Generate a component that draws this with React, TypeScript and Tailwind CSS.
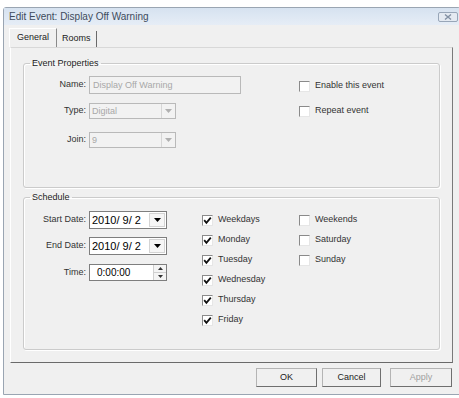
import React from "react";

function Arrow({ color = "#000" }: { color?: string }) {
  return (
    <svg width="7" height="4" viewBox="0 0 7 4">
      <polygon points="0,0 7,0 3.5,4" fill={color} />
    </svg>
  );
}

function CheckBox({ label, checked = false, h = "h-[20px]" }: { label: string; checked?: boolean; h?: string }) {
  return (
    <div className={`flex items-center gap-[5px] ${h}`}>
      <span className="w-[11px] h-[11px] flex items-center justify-center bg-white border border-t-[#8a8a8a] border-l-[#8a8a8a] border-b-[#e6e6e6] border-r-[#e6e6e6]">
        {checked && (
          <svg width="9" height="9" viewBox="0 0 9 9">
            <path d="M1.2 4.2 L3.4 6.8 L7.8 1.6" stroke="#111" strokeWidth="1.8" fill="none" />
          </svg>
        )}
      </span>
      <span className="text-[9px] text-[#333]">{label}</span>
    </div>
  );
}

function DisabledSelect({ value }: { value: string }) {
  return (
    <div className="w-[87px] h-[16px] flex border border-[#b9b9b9] bg-[#f2f2f2]">
      <span className="flex-1 pl-[2px] text-[9px] leading-[14px] text-[#a8a8a8]">{value}</span>
      <span className="w-[14px] flex items-center justify-center border-l border-[#d6d6d6]">
        <Arrow color="#b0b0b0" />
      </span>
    </div>
  );
}

function DatePicker({ value }: { value: string }) {
  return (
    <div className="w-[78px] h-[18px] flex border border-[#7e7e7e] bg-white">
      <span className="flex-1 pl-[2px] text-[11px] leading-[16px] text-black whitespace-pre">{value}</span>
      <span className="w-[16px] my-[1px] mr-[1px] flex items-center justify-center bg-[#f6f6f6] border border-[#d4d4d4]">
        <Arrow />
      </span>
    </div>
  );
}

function TimeBox({ value }: { value: string }) {
  return (
    <div className="w-[78px] h-[17px] flex border border-[#7e7e7e] bg-white">
      <span className="flex-1 pl-[7px] text-[10px] leading-[15px] text-black">{value}</span>
      <span className="w-[13px] flex flex-col border-l border-[#d0d0d0]">
        <span className="flex-1 flex items-center justify-center bg-[#f4f4f4] border-b border-[#d0d0d0]">
          <svg width="5" height="3" viewBox="0 0 5 3"><polygon points="0,3 5,3 2.5,0" fill="#333" /></svg>
        </span>
        <span className="flex-1 flex items-center justify-center bg-[#f4f4f4]">
          <svg width="5" height="3" viewBox="0 0 5 3"><polygon points="0,0 5,0 2.5,3" fill="#333" /></svg>
        </span>
      </span>
    </div>
  );
}

function Label({ text }: { text: string }) {
  return <span className="w-[62px] text-right text-[9px] text-[#333]">{text}</span>;
}

function DialogButton({ text, className, disabled = false }: { text: string; className: string; disabled?: boolean }) {
  return (
    <button
      className={`${className} h-[19px] text-[9px] bg-[#f0f0f0] border border-[#b4b4b4] border-r-[#6f6f6f] border-b-[#6f6f6f] ${
        disabled ? "text-[#a0a0a0]" : "text-[#222]"
      }`}
    >
      {text}
    </button>
  );
}

export default function App() {
  return (
    <div className="w-[459px] h-[398px] bg-white pt-[7px] pl-[3px] font-['Liberation_Sans',Arial,sans-serif] overflow-hidden">
      <div className="w-[458px] h-[388px] flex flex-col border border-[#9aa5b2] rounded-t-[3px] bg-[#f0f0f0]">
        {/* Title bar */}
        <div className="h-[17px] flex items-center justify-between pl-[5px] pr-[2px] bg-gradient-to-b from-[#d6e2f0] to-[#e6edf6]">
          <span className="text-[10px] text-[#3d4b5c]">Edit Event: Display Off Warning</span>
          <span className="w-[20px] h-[10px] flex items-center justify-center border border-[#98a6b8] rounded-[2px] bg-[#e4eaf2]">
            <svg width="8" height="6" viewBox="0 0 8 6">
              <path d="M1 0.5 L7 5.5 M7 0.5 L1 5.5" stroke="#8391a4" strokeWidth="1.4" />
            </svg>
          </span>
        </div>

        {/* Tabs */}
        <div className="flex items-end ml-[5px] mt-[3px] h-[19px]">
          <div className="h-[19px] px-[7px] flex items-center border-t border-l border-white border-r border-r-[#8a8a8a] text-[9px] text-[#222]">
            General
          </div>
          <div className="h-[16px] px-[5px] flex items-center border-r border-[#6a6a6a] text-[9px] text-[#222]">
            Rooms
          </div>
        </div>

        {/* Tab panel */}
        <div className="ml-[6px] w-[443px] h-[316px] flex flex-col px-[12px] border border-t-[#d8d8d8] border-l-white border-r-[#7a7a7a] border-b-[#6a6a6a]">
          <fieldset className="mt-[9px] h-[131px] border border-[#cbcbcb] rounded-[3px] shadow-[inset_1px_1px_0_#fff,1px_1px_0_#fff]">
            <legend className="ml-[6px] px-[2px] text-[9px] leading-[12px] text-[#222]">Event Properties</legend>
            <div className="flex">
              <div className="flex flex-col">
                <div className="mt-[7px] flex items-center gap-[3px]">
                  <Label text="Name:" />
                  <div className="w-[152px] h-[18px] border border-[#b9b9b9] bg-[#f2f2f2] pl-[3px] text-[9px] leading-[16px] text-[#a8a8a8]">
                    Display Off Warning
                  </div>
                </div>
                <div className="mt-[9px] flex items-center gap-[3px]">
                  <Label text="Type:" />
                  <DisabledSelect value="Digital" />
                </div>
                <div className="mt-[13px] flex items-center gap-[3px]">
                  <Label text="Join:" />
                  <DisabledSelect value="9" />
                </div>
              </div>
              <div className="ml-[58px] mt-[11px] flex flex-col gap-[13px]">
                <CheckBox label="Enable this event" h="h-[12px]" />
                <CheckBox label="Repeat event" h="h-[12px]" />
              </div>
            </div>
          </fieldset>

          <fieldset className="mt-[3px] h-[159px] border border-[#cbcbcb] rounded-[3px] shadow-[inset_1px_1px_0_#fff,1px_1px_0_#fff]">
            <legend className="ml-[6px] px-[2px] text-[9px] leading-[12px] text-[#222]">Schedule</legend>
            <div className="flex">
              <div className="flex flex-col">
                <div className="mt-[8px] flex items-center gap-[3px]">
                  <Label text="Start Date:" />
                  <DatePicker value="2010/ 9/ 2" />
                </div>
                <div className="mt-[8px] flex items-center gap-[3px]">
                  <Label text="End Date:" />
                  <DatePicker value="2010/ 9/ 2" />
                </div>
                <div className="mt-[9px] flex items-center gap-[3px]">
                  <Label text="Time:" />
                  <TimeBox value="0:00:00" />
                </div>
              </div>
              <div className="ml-[35px] mt-[7px] w-[97px] flex flex-col">
                <CheckBox label="Weekdays" checked />
                <CheckBox label="Monday" checked />
                <CheckBox label="Tuesday" checked />
                <CheckBox label="Wednesday" checked />
                <CheckBox label="Thursday" checked />
                <CheckBox label="Friday" checked />
              </div>
              <div className="mt-[7px] flex flex-col">
                <CheckBox label="Weekends" />
                <CheckBox label="Saturday" />
                <CheckBox label="Sunday" />
              </div>
            </div>
          </fieldset>
        </div>

        {/* Buttons */}
        <div className="mt-[5px] ml-[252px] flex items-start">
          <DialogButton text="OK" className="w-[61px]" />
          <DialogButton text="Cancel" className="w-[59px] ml-[5px]" />
          <DialogButton text="Apply" className="w-[62px] ml-[9px]" disabled />
        </div>
      </div>
    </div>
  );
}
